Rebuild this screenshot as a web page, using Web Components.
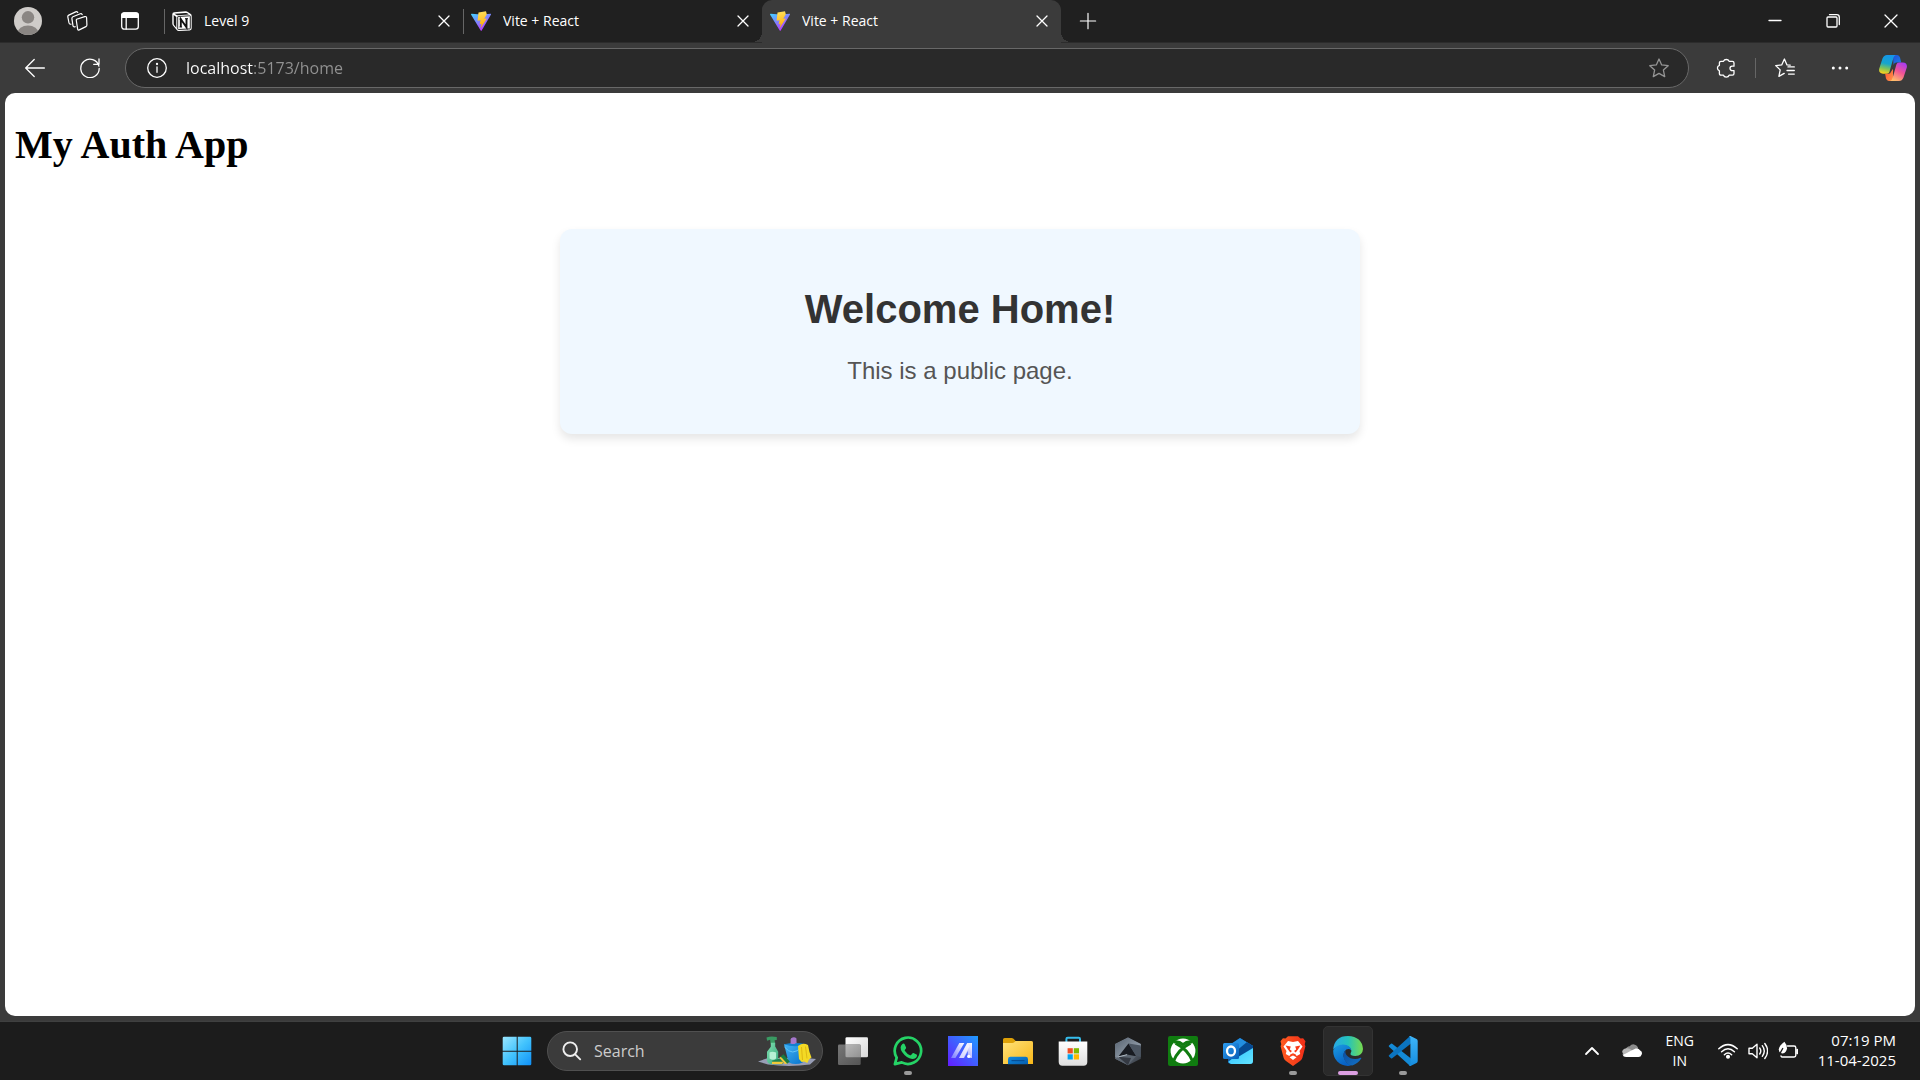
<!DOCTYPE html>
<html lang="en">
<head>
<meta charset="utf-8">
<title>Vite + React</title>
<style>
  html, body { margin: 0; height: 100%; }
  body { font-family: "Open Sans", "Noto Sans", sans-serif; color: #fff; background: #1c1c1c; }
</style>
</head>
<body>
<desktop-screen>
  <browser-window>
    <tab-strip slot="tabs">
      <browser-tab icon="notion">Level 9</browser-tab>
      <browser-tab icon="vite">Vite + React</browser-tab>
      <browser-tab icon="vite" active>Vite + React</browser-tab>
    </tab-strip>
    <browser-toolbar slot="toolbar"></browser-toolbar>
    <auth-app>
      <home-card></home-card>
    </auth-app>
  </browser-window>
  <task-bar slot="taskbar">
    <task-app icon="taskview" label="Task view"></task-app>
    <task-app icon="whatsapp" label="WhatsApp" running></task-app>
    <task-app icon="myasus" label="MyASUS"></task-app>
    <task-app icon="folder" label="File Explorer"></task-app>
    <task-app icon="store" label="Microsoft Store"></task-app>
    <task-app icon="armoury" label="Armoury Crate"></task-app>
    <task-app icon="xbox" label="Xbox"></task-app>
    <task-app icon="outlook" label="Outlook"></task-app>
    <task-app icon="brave" label="Brave" running></task-app>
    <task-app icon="edge" label="Microsoft Edge" current></task-app>
    <task-app icon="vscode" label="Visual Studio Code" running></task-app>
    <system-tray slot="tray"></system-tray>
  </task-bar>
</desktop-screen>

<script>
const line = (body, box = 20, width = 1.3) =>
  `<svg viewBox="0 0 ${box} ${box}" fill="none" stroke="currentColor" stroke-width="${width}" stroke-linecap="round" stroke-linejoin="round">${body}</svg>`;
const art = (body, box = 30) => `<svg viewBox="0 0 ${box} ${box}">${body}</svg>`;
const grad = (id, a, b, dir = 'x1="0" y1="0" x2="1" y2="1"') =>
  `<linearGradient id="${id}" ${dir}><stop stop-color="${a}"/><stop offset="1" stop-color="${b}"/></linearGradient>`;

const ICONS = {
  avatar: art(`<defs><clipPath id="c"><circle cx="14" cy="14" r="14"/></clipPath></defs><g clip-path="url(#c)"><rect width="28" height="28" fill="#cfccc9"/><circle cx="14" cy="10.300" r="6.200" fill="#8a8683"/><ellipse cx="14" cy="26" rx="10.500" ry="7.500" fill="#8a8683"/></g>`, 28),
  workspaces: line(`<path d="M9.600 8.300 17.700 5.600q1.700-.4 1.900 1.200l.3 7.200q0 1.200-1 1.600l-6.600 3.300q-1.500.5-1.700-1L9.300 9.500q-.1-.9.300-1.200Z"/><path d="M8.200 15.700q-1.800.6-2.200-.9L4.900 7.600q-.1-1.400 1-1.900l7.400-2.900q1.200-.4 1.900.7"/><path d="M4 13.200q-1.700.3-2-1.200L.8 5.800Q.7 4.600 1.800 4.100L8.700.9q1.300-.5 2 .5"/>`, 21, 1.2),
  vtabs: line(`<rect x="1.700" y="2" width="16.600" height="16.200" rx="2.600"/><path d="M6.200 6v12"/><path d="M1.700 6.300V4.200Q1.900 2 4.200 2h11.600q2.300 0 2.500 2.200v2.100Z" fill="currentColor"/>`),
  notion: art(`<path d="M2.300 1.200 13.600.3q1.300-.1 2.200.6l3 2.200q.9.700.9 1.900v12.200q0 2-2 2.200L7 20q-1.400.1-2.200-.9L1 14.400q-.7-.9-.7-2V3.300q0-1.900 2-2.100Z" fill="#fff"/><path d="m2.600 2.800 11.100-.9q.9-.1 1.500.3l1.700 1.300-11.200.7q-.8.100-1.500-.4Z" fill="#181818"/><path d="M1.700 3.900 4.300 5.900v10.900L2.100 14q-.4-.5-.4-1.100Z" fill="#181818"/><path d="M5.700 6q0-.5.500-.5l11.600-.7q.5 0 .5.500v11.900q0 .6-.6.700l-11.300.6q-.7 0-.7-.6Z" fill="#fff" stroke="#181818" stroke-width=".9"/><path d="M8.800 16V8.200l5.700 8V7.700" fill="none" stroke="#111" stroke-width="1.900"/><path d="M7.500 8.100h2M13 7.700h3M7.500 16h2.600" stroke="#111"/>`, 20),
  vite: art(`<defs>${grad('a', '#41d1ff', '#bd34fe', 'x1="0" y1="0" x2=".6" y2="1"')}${grad('b', '#ffdf5a', '#ffa800', 'x1=".5" y1="0" x2=".6" y2="1"')}</defs><path d="M.5 2.800 10.200 3.500 19.700 2.800q.6.200.3.800L10.700 19.600q-.5.600-1 0L0 3.600Q0 2.900.5 2.800Z" fill="url(#a)"/><path d="m15 .2-7.500 1.300-.9 8.300 3-.6-1 4 2-.5-.9 4.300 6.200-9.600-2.600.4 2.500-4.500Z" fill="url(#b)"/>`, 20),
  close: line(`<path d="m5 5 10 10M15 5 5 15"/>`),
  plus: line(`<path d="M10 1.500v17M1.500 10h17"/>`),
  minimize: line(`<path d="M4 9.500h12"/>`),
  restore: line(`<rect x="4" y="6" width="10" height="10" rx="1"/><path d="M6.500 3.700h7.200q2.600 0 2.600 2.600v7.200"/>`),
  winclose: line(`<path d="m4 4 12 12M16 4 4 16"/>`),
  back: line(`<path d="M19.400 10H.8M9.200 1.500.7 10l8.500 8.500"/>`),
  reload: line(`<path d="M18.900 8.100A9.200 9.200 0 1 0 19.200 10.500M19 1v5.300h-5.300"/>`),
  info: line(`<circle cx="10" cy="10" r="9.300"/><path d="M10 9v5.300"/><circle cx="10" cy="6" r=".5" fill="currentColor"/>`),
  star: line(`<path d="m10 1 2.700 5.900 6.500.8-4.800 4.400 1.300 6.500-5.700-3.200-5.700 3.200 1.300-6.500L.8 7.700l6.500-.8Z"/>`),
  puzzle: line(`<path d="M7.500 3.300a3 2.800 0 0 1 5.600 0h3.300q1.600 0 1.600 1.600v3.300h-1.800a2.200 2.200 0 0 0 0 4.400H18v3q0 1.600-1.600 1.600h-3.300a2.900 2.600 0 0 1-5.600 0H5q-1.600 0-1.600-1.600v-2.800a2.900 2.900 0 0 1 0-5.500V4.900q0-1.600 1.600-1.600Z"/>`),
  favorites: line(`<path d="M12 6.900 9.400 1 6.700 6.900l-6 .7 4.500 4.300-1.300 6.500 5.300-3M13 8.900h6.300M12 12.500h7.300M13.500 16.100h5.800M12 6.900l3.200.3"/>`),
  more: art(`<g fill="#fff"><circle cx="3.300" cy="10" r="1.500"/><circle cx="10" cy="10" r="1.500"/><circle cx="16.700" cy="10" r="1.500"/></g>`, 20),
  copilot: art(`<defs><linearGradient id="a" x1=".5" y1="0" x2=".3" y2="1"><stop stop-color="#1595e8"/><stop offset=".45" stop-color="#16a5cc"/><stop offset=".72" stop-color="#7dc35a"/><stop offset="1" stop-color="#ffd21b"/></linearGradient><linearGradient id="b" x1=".8" y1="0" x2=".3" y2="1"><stop stop-color="#a63af4"/><stop offset=".5" stop-color="#f25494"/><stop offset="1" stop-color="#ffbe6b"/></linearGradient>${grad('c', '#254bd6', '#1687e9')}${grad('d', '#ff4e31', '#ff9549')}</defs><path d="M14 1h4.200q2 .2 2.800 2.600l1.200 4.900h-5.100q-2 .3-2.600 2.400Z" fill="url(#c)"/><path d="M8 1h9q-2 .4-2.900 4l-3.700 13q-.5 1.700-2.500 1.700H4q-4.700-.4-3.800-5L3.500 4.500Q4.900 1 8 1Z" fill="url(#a)"/><path d="M14 27H9.800q-2-.2-2.800-2.600l-.9-4.700h3.700q1.600-.2 2.200-2l2-3Z" fill="url(#d)"/><path d="M20 27h-9q2-.4 2.900-4l3.500-12.500q.6-2 2.700-2h3.800q4.700.4 3.900 5L24.500 23.500Q23.100 27 20 27Z" fill="url(#b)"/>`, 28),
  start: art(`<defs><linearGradient id="a" gradientUnits="userSpaceOnUse" x1="0" y1="0" x2="30" y2="30"><stop stop-color="#9fe8ff"/><stop offset=".5" stop-color="#42c3fd"/><stop offset="1" stop-color="#0d8ef8"/></linearGradient></defs><path d="M2 .7h12.700v14H.7V2Q.7.7 2 .7Zm13.700 0H28q1.300 0 1.300 1.300v12.700H15.700ZM.7 15.700h14v13.600H2Q.7 29.300.7 28Zm15 0h13.600V28q0 1.300-1.300 1.300H15.700Z" fill="url(#a)"/>`),
  search: line(`<circle cx="8.200" cy="8.200" r="6.800"/><path d="m13.200 13.300 5 5"/>`, 20, 1.9),
  cleaning: `<svg viewBox="0 0 58 30"><defs>${grad('a', '#80e0b1', '#38a87d')}${grad('b', '#42b3f5', '#0671cb')}</defs><path d="M0 25.500 10 22 48 22l10 1-6 5.500q-21 2.800-42 0Z" fill="#989eb6"/><path d="M8.500 1.400Q13-.3 18.800 1v3l-2.200.2.600 3.300h-4.600l-.5-3.700-3 1Z" fill="#399a62"/><path d="M12.800 6.700h4.400v3.800l3 5.300v9q-.7 3.300-5.500 3.400-5.600-.2-5.700-4v-8.500l3.800-5Z" fill="url(#a)"/><path d="M11.500 16.500q2.800-1.700 6.600 0v6q-3 2.500-6.600 0Z" fill="#b8f0d5"/><path d="M33 2.400q3-2.200 5.500 0v4q2 1.400 1.500 4.600l-8.300-.4q-.5-3 1.300-4.200Z" fill="#a577cb"/><path d="M26 8.300h22l-3.300 18.200q-7 3-14 0Z" fill="url(#b)"/><path d="M26 8.300q11-2.600 22 0-11 4-22 0Z" fill="#137fce"/><path d="M32.600 7.600V3q2.500-2 5 0v4.600q-2.500 1-5 0Z" fill="#a577cb"/><path d="M26.500 11q8 10 17 0" fill="none" stroke="#64c5f8"/><path d="M40 10q5-4 10-1l1.500 7 2 5.500-2.500 2-1.700 3.500-3-1.500-2.600.5-2.700-3Z" fill="#f3da25"/><path d="m43.500 11 1 13M47.500 10.500l1.500 12" stroke="#dfb813"/><path d="m14 24.800 9-2.500 4 2.500-2.500 3.500H14.800Z" fill="#208550"/><path d="M14 25.800h11.300l-1 2.300H14Z" fill="#f1c93b"/><path d="m22.500 20.500 3-2.300 6.300 7.300-3 2.500Z" fill="#187c43"/><path d="m21.300 21.700 1.500-1 6.500 7-2.500.4Z" fill="#f1c83d"/></svg>`,
  taskview: art(`<defs>${grad('a', '#fff', '#d8d8d8')}${grad('b', '#777', '#555')}${grad('c', '#b8b8b8', '#929292')}</defs><rect x="7.500" y="1.200" width="22.500" height="20" rx="1.300" fill="url(#a)"/><rect x="0" y="8.500" width="22.700" height="20.500" rx="1.300" fill="url(#b)"/><path d="M7.500 8.500h13.900q1.300 0 1.300 1.300v11.400H8.800q-1.300 0-1.300-1.300Z" fill="url(#c)"/>`),
  whatsapp: art(`<path d="M1.900 28.100 3.700 21.700A13.200 13.200 0 1 1 8.700 26.400Z" fill="none" stroke="#25d366" stroke-width="2.700" stroke-linejoin="round"/><path d="M9.400 7.900q.8-.6 1.800-.1.400.2 1.900 3.700.3.700-1.300 2.400-.3.400.2 1.100 2 3 5 4.200.7.300 1.100-.2l1.500-1.700q.4-.4.9-.2l3 1.500q.6.300.5.800-.2 3.300-4.800 3.500-5.800-.7-10.100-7-3.200-5 .3-8Z" fill="#25d366"/>`),
  myasus: art(`<defs>${grad('a', '#1e9dff', '#641cff', 'x1="1" y1="0" x2="0" y2="1"')}${grad('b', '#fff', '#7779ff', 'x1="1" y1="0" x2="0" y2="1"')}</defs><rect width="30" height="30" fill="url(#a)"/><path d="M11.300 7h5L7.400 22H3Z" fill="url(#b)"/><path d="M19.300 7H24v15h-4.500l.4-7-3.700 7H11Z" fill="url(#b)"/><path d="M19.300 7 11 22h4.600l6-12Z" fill="#fff" opacity=".65"/><circle cx="20.800" cy="20.300" r="1.600" fill="#fff"/>`),
  folder: art(`<defs>${grad('a', '#ffe27b', '#f8b718')}${grad('b', '#118be2', '#065dac')}</defs><path d="M0 3.600q0-1.600 1.600-1.600h7q1 0 1.600.6L12.700 5H28q2 0 2 2v5H0Z" fill="#dda008"/><path d="M0 7h9.500q1 0 1.800-.7l1.300-1.200H28q2 0 2 2v21H0Z" fill="url(#a)"/><path d="M5 28.200v-5q0-2.400 2.400-2.400h15.200q2.400 0 2.400 2.400v5Z" fill="url(#b)"/><path d="M8.500 24.600h13" stroke="#064f96" stroke-width="1.200"/>`),
  store: art(`<defs>${grad('a', '#fff', '#dedede', 'x1="0" y1="0" x2="0" y2="1"')}</defs><path d="M8.400 7V3q0-1.300 1.300-1.300h11q1.300 0 1.300 1.300v4" fill="none" stroke="#36bdec" stroke-width="2"/><path d="M.7 5.500h28.600V26q0 3.700-3.700 3.700H4.400Q.7 29.700.7 26Z" fill="url(#a)"/><path fill="#f04f23" d="M9.600 12.200h5.200v5.200H9.600z"/><path fill="#7fba00" d="M15.800 12.200H21v5.200h-5.200z"/><path fill="#00a4ef" d="M9.600 18.300h5.200v5.200H9.600z"/><path fill="#ffb900" d="M15.800 18.300H21v5.200h-5.200z"/>`),
  armoury: art(`<defs>${grad('a', '#56626f', '#aab5c1')}${grad('b', '#8d98a5', '#343a43')}</defs><path d="M15 1.500 27.800 8v14.800L15 29.300 2.200 22.800V8Z" fill="url(#b)"/><path d="M15 1.500 2.200 8v13l3 1.500L15.500 7.500 27.800 11V8Z" fill="url(#a)"/><path d="M15.500 7.500 5.200 20.800 14 18.500l4.500 2.200 4.500-1Z" fill="#191c22"/><path d="M15.500 7.500 23 19.700l4.800 1.300V9.500Z" fill="#4b5561"/><path d="M5.200 20.800 14 18.500l9 1.700-8 9.100-12.800-6.500Z" fill="#5c6570"/><path d="m15 29.300-9.800-8.500L18 22Z" fill="#343942"/><path d="m4.800 21 9.200-2.300" fill="none" stroke="#aeb8c2"/>`),
  xbox: art(`<rect width="30" height="30" rx="2" fill="#107c10"/><circle cx="15" cy="15" r="12.400" fill="#fff"/><path d="M3.500 3.500h6q-3 .5-4.800 4.200-2 2-3.200 3.800ZM26.500 3.500h-6q3 .5 4.800 4.200 2 2 3.200 3.800Z" fill="#107c10"/><path d="M5.500 6.100q4.700-1.600 9.500 2.500 4.800-4.100 9.500-2.500" fill="none" stroke="#107c10" stroke-width="3"/><path d="M7.500 7.200Q20 13.500 24.800 25.800M22.500 7.200Q10 13.500 5.200 25.800" fill="none" stroke="#107c10" stroke-width="3"/>`),
  outlook: art(`<defs>${grad('a', '#2d9df1', '#075db6')}${grad('b', '#2bc0ff', '#65e4ff')}</defs><path d="m5 10 12-8 13 8v15q0 3-3 3H8q-3 0-3-3Z" fill="#0b57a8"/><path d="m5 10 12-8 13 8-13 8Z" fill="#238ee0"/><path d="m15 18 15-8v15q0 3-3 3H8l-3-2Z" fill="url(#b)"/><path d="m12 16 12-10 6 4v2L15 21Z" fill="#064991"/><rect x="0" y="7" width="16" height="16" rx="1.500" fill="url(#a)"/><ellipse cx="8" cy="15" rx="4" ry="4.500" fill="none" stroke="#fff" stroke-width="2.300"/>`),
  brave: art(`<defs>${grad('a', '#ff5b20', '#f12e18', 'x1="0" y1="0" x2="1" y2="0"')}</defs><path d="M7.500 2.400 10 .2h10l2.500 2.200 2.600-.2 2.400 3-.8 3 .7 2-3 11.500q-.5 2-2.400 3.300L15 30l-7-5q-1.900-1.300-2.400-3.300L2.600 10.200l.7-2-.8-3 2.400-3Z" fill="url(#a)"/><path d="m10 5 5 1 5-1 4.500 5.500-3 4.500.7 3-3.500 2-1.300-1.700-2.400-1-2.400 1L11.300 20l-3.500-2 .7-3-3-4.500Z" fill="#fff"/><path d="m7.500 9.500 5.300 1-1 3 2.200 1.500-1.700 1.500-2.300-3ZM22.500 9.500l-5.300 1 1 3L16 15l1.700 1.500 2.300-3Z" fill="#f83b1a"/><path d="m11.500 21.300 3.500-1.700 3.500 1.700L15 24Z" fill="#fff"/>`),
  edge: art(`<defs><linearGradient id="a" x1="0" y1=".5" x2="1" y2=".5"><stop stop-color="#28a8e7"/><stop offset=".5" stop-color="#25c3bb"/><stop offset="1" stop-color="#78db4d"/></linearGradient>${grad('b', '#1b9de2', '#0760c4', 'x1="0" y1="0" x2=".5" y2="1"')}${grad('c', '#0d4c9d', '#1272c7', 'x1="0" y1="0" x2="1" y2="1"')}</defs><path d="M.2 13.800Q1.300 0 15 0q14 .7 15 13-.3 6.600-7.700 7-5.500 0-4.700-2.700 1-1.300.7-3-1.400-4.800-8.300-4.800-6.200 0-9.800 4.300Z" fill="url(#a)"/><path d="M.2 14.500Q3 8.500 10 8.500q7.700.4 8.300 5.800-2.300-2.300-5-.7-3.300 2.300-2.700 7 1.200 6 7.400 9Q10 31 4.300 25.500 0 21 .2 14.500Z" fill="url(#b)"/><path d="M12.500 14.600q-3.300 3-1.600 7.800 3 6.600 8.300 7 5.800-1.900 9-7 .4-1-.7-.6-4.700 2.200-10 .4-6-3-5-7.600Z" fill="url(#c)"/>`),
  vscode: art(`<defs>${grad('a', '#3eb5f8', '#168de0', 'x1="0" y1="0" x2="0" y2="1"')}</defs><path d="m1 9.500 2-1.700q.6-.4 1.200 0L23 22.500v7.200q-1 .2-1.700-.5L1 10.700q-.6-.6 0-1.200Z" fill="#148ad6"/><path d="m1 20.500 2 1.700q.6.400 1.200 0L23 7.500V.3q-1-.2-1.700.5L1 19.300q-.6.600 0 1.200Z" fill="#0b74c0"/><path d="m22.500.1 6 2.900q1.200.6 1.200 1.900v20.200q0 1.300-1.200 1.900l-6 2.900q-1 .2-1.700-.7 1.600.2 1.600-1.200V2q0-1.400-1.600-1.200.7-.9 1.700-.7Z" fill="url(#a)"/>`),
  chevron: line(`<path d="m4 13 6-6 6 6"/>`, 20, 1.8),
  cloud: art(`<path d="M3.500 8.500q1-3 4.200-3.200 1.600-2.200 4.300-1.900 3.400.5 4.300 4l-6 4Z" fill="#8c8c8c"/><path d="M2.500 14Q-.4 12.300.4 9.700q1-2.300 3.900-2.500 2.800-.4 5.700 2.100l3.500 2Z" fill="#b7b7b7"/><path d="m7.500 10.500 6.200-3Q16.800 7 18.200 9.500q2.500 1.300 1.500 4-.8 2.500-3.200 2.500H4Q1.300 16 .5 13.500q2.300-.2 7-3Z" fill="#fff"/>`, 20),
  wifi: line(`<path d="M.8 7.800q9.200-8.300 18.400 0M3.600 10.800q6.400-6 12.800 0M6.400 13.700q3.600-3.400 7.200 0"/><circle cx="10" cy="15.700" r="1.300" fill="currentColor"/>`, 20, 1.5),
  volume: line(`<path d="M1 7.300h3.300L9 3.200v13.600l-4.700-4.100H1ZM11.700 7q2.200 3 0 6M14.300 4.700q4 5.300 0 10.600M16.800 2.500q5.600 7.500 0 15"/>`, 20, 1.4),
  battery: line(`<path d="M9.500 5h6.600q1.700 0 1.700 1.700v7.600q0 1.700-1.700 1.700H4.500q-1.200 0-1.500-1"/><path d="M19.200 8.800v3.400" stroke-width="2"/><path d="M6.400.7q2.700 3 2.600 6.500-.4 4.600-4.500 5.300Q.8 12 .8 8.300 1.200 4.500 6.400.7Z" fill="currentColor" stroke="none"/><path d="M1.500 14q1-3 3.200-6.500" stroke="#1c1c1c"/>`, 20, 1.4)
};

function define(name, render) {
  customElements.define(name, class extends HTMLElement {
    constructor() {
      super();
      this.attachShadow({ mode: 'open' });
    }
    connectedCallback() {
      const template = document.createElement('template');
      template.innerHTML = `<style>
        :host, *, ::before, ::after { box-sizing: border-box; }
        button { display: flex; align-items: center; justify-content: center; padding: 0; border: 0; background: none; color: inherit; font: inherit; flex: none; }
        input { min-width: 0; padding: 0; border: 0; outline: 0; background: none; font: inherit; }
      </style>` + render(this);
      this.shadowRoot.replaceChildren(template.content.cloneNode(true));
    }
  });
}

define('ui-icon', el => {
  const size = el.getAttribute('size') || 20;
  return `<style>:host { display: block; flex: none; width: ${size}px; } svg { display: block; width: 100%; }</style>${ICONS[el.getAttribute('name')]}`;
});

define('desktop-screen', () => `
  <style>
    :host { display: flex; flex-direction: column; min-height: 100vh; }
    ::slotted(browser-window) { flex: 1; }
  </style>
  <slot></slot><slot name="taskbar"></slot>`);

define('browser-window', () => `
  <style>
    :host { display: flex; flex-direction: column; background: #3b3b3b; }
    main { display: flex; flex: 1; margin: 0 5px 5px; border-radius: 10px; background: #fff; color: #000; overflow: hidden; }
    ::slotted(auth-app) { flex: 1; }
  </style>
  <slot name="tabs"></slot><slot name="toolbar"></slot><main><slot></slot></main>`);

define('tab-strip', () => `
  <style>
    :host { display: flex; height: 43px; background: #202020; border-bottom: 1px solid #2c2c2c; }
    .tools { display: flex; align-items: center; width: 164px; padding-left: 14px; gap: 32px; }
    .tools button:first-child { margin-right: -7px; }
    .tabs { display: flex; min-width: 0; }
    .new { width: 54px; }
    .window { display: flex; margin-left: auto; }
    .window button { width: 58px; }
  </style>
  <div class="tools">
    <button aria-label="Profile"><ui-icon name="avatar" size="28"></ui-icon></button>
    <button aria-label="Workspaces"><ui-icon name="workspaces" size="21"></ui-icon></button>
    <button aria-label="Tab actions"><ui-icon name="vtabs" size="20"></ui-icon></button>
  </div>
  <div class="tabs"><slot></slot></div>
  <button class="new" aria-label="New tab"><ui-icon name="plus" size="18"></ui-icon></button>
  <div class="window">
    <button aria-label="Minimize"><ui-icon name="minimize"></ui-icon></button>
    <button aria-label="Restore"><ui-icon name="restore"></ui-icon></button>
    <button aria-label="Close"><ui-icon name="winclose"></ui-icon></button>
  </div>`);

define('browser-tab', el => `
  <style>
    :host { display: flex; align-items: center; gap: 12px; width: 299px; padding: 0 9px 0 8px; position: relative; font-size: 14px; line-height: 20px; }
    :host(:not([active]))::before { content: ""; width: 1px; height: 25px; margin: 0 -5px 0 -8px; background: #666; }
    :host([active]) { background: #3b3b3b; border-radius: 10px 10px 0 0; box-shadow: 0 1px #3b3b3b; }
    :host([active])::before, :host([active])::after { content: ""; position: absolute; bottom: 0; width: 10px; height: 10px; }
    :host([active])::before { left: -10px; background: radial-gradient(circle at 0 0, transparent 10px, #3b3b3b 10px); }
    :host([active])::after { right: -10px; background: radial-gradient(circle at 100% 0, transparent 10px, #3b3b3b 10px); }
    .title { flex: 1; white-space: nowrap; overflow: hidden; }
  </style>
  <ui-icon name="${el.getAttribute('icon')}" size="20"></ui-icon>
  <span class="title"><slot></slot></span>
  <button aria-label="Close tab"><ui-icon name="close"></ui-icon></button>`);

define('browser-toolbar', () => `
  <style>
    :host { display: flex; align-items: center; height: 50px; padding: 0 13px 0 25px; }
    .nav { display: flex; gap: 35px; margin-right: 25px; }
    .address { display: flex; align-items: center; flex: 1; height: 40px; padding: 0 19px 0 21px; border: 1px solid #686868; border-radius: 20px; background: #292929; font-size: 16px; }
    .address input { flex: 1; height: 24px; margin: 0 16px 0 19px; color: #fff; -webkit-text-fill-color: transparent; background: linear-gradient(90deg, #fff 68px, #929292 68px); -webkit-background-clip: text; background-clip: text; }
    .star { color: #949494; }
    .actions { display: flex; align-items: center; margin-left: 27px; }
    .rule { width: 1px; height: 20px; margin: 0 19px; background: #666; }
    .more { margin: 0 29px 0 35px; }
  </style>
  <div class="nav">
    <button aria-label="Back"><ui-icon name="back"></ui-icon></button>
    <button aria-label="Reload"><ui-icon name="reload"></ui-icon></button>
  </div>
  <div class="address">
    <button aria-label="Site information"><ui-icon name="info"></ui-icon></button>
    <input type="text" aria-label="Address" value="localhost:5173/home" spellcheck="false">
    <button class="star" aria-label="Add to favorites"><ui-icon name="star"></ui-icon></button>
  </div>
  <div class="actions">
    <button aria-label="Extensions"><ui-icon name="puzzle"></ui-icon></button>
    <span class="rule"></span>
    <button aria-label="Favorites"><ui-icon name="favorites"></ui-icon></button>
    <button class="more" aria-label="Settings and more"><ui-icon name="more"></ui-icon></button>
    <button aria-label="Copilot"><ui-icon name="copilot" size="28"></ui-icon></button>
  </div>`);

define('auth-app', () => `
  <style>
    :host { display: block; padding: 29px 10px 10px; font-family: "Liberation Serif", serif; }
    h1 { margin: 0; font-size: 40px; line-height: 46px; }
  </style>
  <h1>My Auth App</h1>
  <slot></slot>`);

define('home-card', () => `
  <style>
    :host { display: block; max-width: 800px; margin: 61px auto 0; padding: 57px 25px 50px; border-radius: 12px; background: #f0f8ff; box-shadow: 0 5px 10px rgba(0, 0, 0, .1); text-align: center; font-family: "Liberation Sans", sans-serif; }
    h2 { margin: 0 0 25px; font-size: 40px; line-height: 46px; color: #333; }
    p { margin: 0; font-size: 24px; line-height: 27px; color: #555; }
  </style>
  <h2>Welcome Home!</h2>
  <p>This is a public page.</p>`);

define('task-bar', () => `
  <style>
    :host { display: grid; grid-template-columns: 1fr auto 1fr; height: 59px; align-items: center; background: #1c1c1c; border-top: 1px solid #3f4040; }
    nav { display: flex; align-items: center; gap: 5px; grid-column: 2; }
    .start { width: 50px; height: 50px; }
    .search { display: flex; align-items: center; width: 276px; height: 40px; padding: 0 6px 0 14px; border: 1px solid #505050; border-radius: 20px; background: #3b3b3b; color: #eee; }
    .search input { flex: 1; margin: 0 12px; font-size: 16px; line-height: 24px; color: #eee; }
    .search input::placeholder { color: #ccc; opacity: 1; }
    ::slotted(system-tray) { justify-self: end; }
  </style>
  <nav aria-label="Taskbar">
    <button class="start" aria-label="Start"><ui-icon name="start" size="30"></ui-icon></button>
    <label class="search">
      <ui-icon name="search"></ui-icon>
      <input type="text" placeholder="Search" aria-label="Search">
      <ui-icon name="cleaning" size="58"></ui-icon>
    </label>
    <slot></slot>
  </nav>
  <slot name="tray"></slot>`);

define('task-app', el => `
  <style>
    :host { display: block; }
    button { position: relative; width: 50px; height: 50px; border: 1px solid transparent; border-radius: 5px; }
    :host([current]) button { background: #2a2a2a; border-color: #333; }
    :host([running]) button::after, :host([current]) button::after { content: ""; position: absolute; bottom: 0; width: 8px; height: 4px; border-radius: 2px; background: #9a9a9a; }
    :host([current]) button::after { width: 20px; background: #dc9fe2; }
  </style>
  <button aria-label="${el.getAttribute('label')}"><ui-icon name="${el.getAttribute('icon')}" size="30"></ui-icon></button>`);

define('system-tray', () => `
  <style>
    :host { display: flex; align-items: center; padding-right: 24px; font-size: 15px; line-height: 20px; white-space: nowrap; }
    .lang { width: 56px; margin: 0 10px; text-align: center; font-size: 14px; }
    .lang span, time span { display: block; }
    .cloud { margin-left: 20px; }
    .status { gap: 10px; margin-right: 20px; }
    time { padding-bottom: 2px; text-align: right; }
  </style>
  <button aria-label="Show hidden icons"><ui-icon name="chevron"></ui-icon></button>
  <button class="cloud" aria-label="OneDrive"><ui-icon name="cloud"></ui-icon></button>
  <button class="lang" aria-label="Input language"><span><span>ENG</span><span>IN</span></span></button>
  <button class="status" aria-label="Network, volume and battery"><ui-icon name="wifi"></ui-icon><ui-icon name="volume"></ui-icon><ui-icon name="battery"></ui-icon></button>
  <time datetime="2025-04-11T19:19"><span>07:19 PM</span><span>11-04-2025</span></time>`);
</script>
</body>
</html>
